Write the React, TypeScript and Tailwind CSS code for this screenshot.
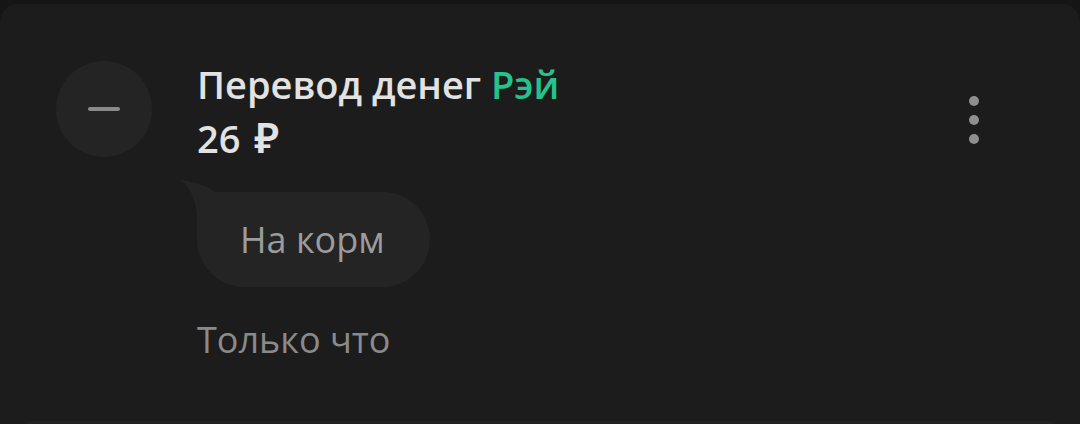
export default function App() {
  return (
    <div
      className="flex h-[424px] w-[1080px] flex-col bg-[#151515] pt-[4px]"
      style={{ fontFamily: '"Open Sans", "Noto Sans", sans-serif' }}
    >
      <div className="flex flex-1 flex-col rounded-t-[18px] bg-[#1c1c1c]">
        <div className="flex flex-1 pl-[56px] pr-[101px] pt-[53px]">
          {/* avatar */}
          <div className="mt-[4px] flex h-[96px] w-[96px] shrink-0 items-center justify-center rounded-full bg-[#242424]">
            <div className="h-[4px] w-[32px] rounded-full bg-[#8a8a8a]" />
          </div>

          <div className="ml-[45px] flex flex-1 flex-col">
            <div className="flex items-start justify-between">
              <div className="flex flex-col">
                <div className="text-[38px] font-semibold leading-[54px] text-[#e2e2e2]">
                  Перевод денег <span className="text-[#26c28c]">Рэй</span>
                </div>
                <div className="h-[54px] text-[38px] font-semibold leading-[54px] text-[#e2e2e2]">
                  26 <span className="ml-[4px] text-[42px] leading-none">₽</span>
                </div>
              </div>
              <div className="mt-[39px] flex flex-col gap-[9px]">
                <div className="h-[10px] w-[10px] rounded-full bg-[#8f8f8f]" />
                <div className="h-[10px] w-[10px] rounded-full bg-[#8f8f8f]" />
                <div className="h-[10px] w-[10px] rounded-full bg-[#8f8f8f]" />
              </div>
            </div>

            {/* message bubble */}
            <div className="relative mt-[27px] self-start">
              <svg
                className="absolute left-[-16px] top-[-12px]"
                width="44"
                height="40"
                viewBox="0 0 44 40"
              >
                <path d="M0 0 C14 2 26 6 34 12 L44 12 L44 40 L16 40 C16 22 10 8 0 0 Z" fill="#242424" />
              </svg>
              <div className="relative flex h-[95px] items-center rounded-[48px] rounded-tl-[20px] bg-[#242424] pl-[43px] pr-[45px] text-[36px] leading-[48px] text-[#9c9c9c]">
                На корм
              </div>
            </div>

            <div className="mt-[33px] text-[36px] leading-[40px] text-[#8a8a8a]">
              Только что
            </div>
          </div>
        </div>
        <div className="mx-[27px] h-[3px] rounded-t-[3px] bg-[#222222]" />
      </div>
    </div>
  );
}
